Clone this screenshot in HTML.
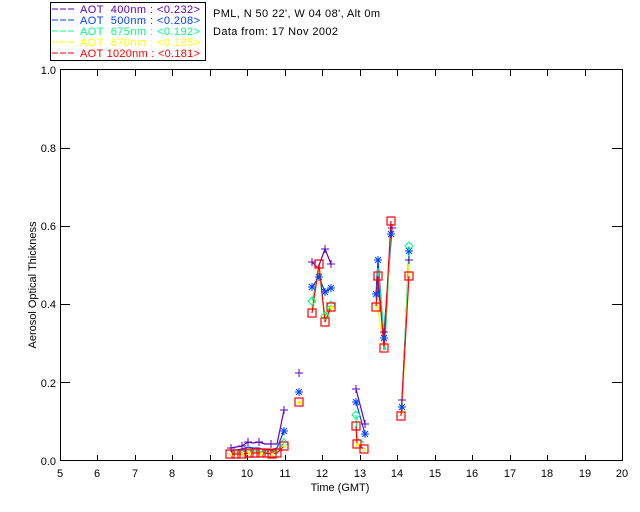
<!DOCTYPE html>
<html><head><meta charset="utf-8"><style>
html,body{margin:0;padding:0;background:#fff;width:640px;height:512px;overflow:hidden}
svg{display:block}
text{font-family:"Liberation Sans",sans-serif;font-size:11px;fill:#000;white-space:pre}
</style></head><body>
<svg width="640" height="512" viewBox="0 0 640 512" xmlns="http://www.w3.org/2000/svg">
<rect width="640" height="512" fill="#fff"/>
<!-- legend -->
<rect x="50.5" y="2.5" width="155" height="58" fill="none" stroke="#000" stroke-width="1"/>
<g font-size="11">
<line x1="52" y1="9" x2="75" y2="9" stroke="#6000c0" stroke-dasharray="6,2"/>
<text x="80" y="13" textLength="120" style="fill:#6000c0">AOT  400nm : &lt;0.232&gt;</text>
<line x1="52" y1="20" x2="75" y2="20" stroke="#0040ff" stroke-dasharray="6,2"/>
<text x="80" y="24" textLength="120" style="fill:#0040ff">AOT  500nm : &lt;0.208&gt;</text>
<line x1="52" y1="31" x2="75" y2="31" stroke="#00ff80" stroke-dasharray="6,2"/>
<text x="80" y="35" textLength="120" style="fill:#00ff80">AOT  675nm : &lt;0.192&gt;</text>
<line x1="52" y1="42" x2="75" y2="42" stroke="#ffff00" stroke-dasharray="6,2"/>
<text x="80" y="46" textLength="120" style="fill:#ffff00">AOT  870nm : &lt;0.185&gt;</text>
<line x1="52" y1="53" x2="75" y2="53" stroke="#ff0000" stroke-dasharray="6,2"/>
<text x="80" y="57" textLength="120" style="fill:#ff0000">AOT 1020nm : &lt;0.181&gt;</text>
</g>
<text x="213" y="17" textLength="167">PML, N 50 22', W 04 08', Alt 0m</text>
<text x="213" y="35" textLength="125">Data from: 17 Nov 2002</text>
<!-- axes -->
<rect x="60.5" y="69.5" width="562" height="391" fill="none" stroke="#000" stroke-width="1"/>
<g stroke="#000" stroke-width="1">
<path d="M97.5 461v-6M135.5 461v-6M172.5 461v-6M210.5 461v-6M247.5 461v-6M285.5 461v-6M322.5 461v-6M360.5 461v-6M397.5 461v-6M435.5 461v-6M472.5 461v-6M510.5 461v-6M547.5 461v-6M585.5 461v-6"/>
<path d="M97.5 70v6M135.5 70v6M172.5 70v6M210.5 70v6M247.5 70v6M285.5 70v6M322.5 70v6M360.5 70v6M397.5 70v6M435.5 70v6M472.5 70v6M510.5 70v6M547.5 70v6M585.5 70v6"/>
<path d="M60 148.5h10M60 226.5h10M60 304.5h10M60 382.5h10"/>
<path d="M622 148.5h-10M622 226.5h-10M622 304.5h-10M622 382.5h-10"/>
</g>
<g text-anchor="middle">
<text x="60" y="477">5</text><text x="97" y="477">6</text><text x="135" y="477">7</text><text x="172" y="477">8</text><text x="210" y="477">9</text><text x="247" y="477">10</text><text x="285" y="477">11</text><text x="322" y="477">12</text><text x="360" y="477">13</text><text x="397" y="477">14</text><text x="435" y="477">15</text><text x="472" y="477">16</text><text x="510" y="477">17</text><text x="547" y="477">18</text><text x="585" y="477">19</text><text x="622" y="477">20</text>
</g>
<g text-anchor="end">
<text x="56" y="465">0.0</text><text x="56" y="387">0.2</text><text x="56" y="308">0.4</text><text x="56" y="230">0.6</text><text x="56" y="152">0.8</text><text x="56" y="74">1.0</text>
</g>
<text x="340" y="491" text-anchor="middle">Time (GMT)</text>
<text transform="translate(36,285) rotate(-90)" text-anchor="middle">Aerosol Optical Thickness</text>
<!-- data lines -->
<g fill="none" stroke-width="1.2">
<g stroke="#6000c0">
<polyline points="231,448 236,447 242,446 248,442 253,443 259,442 265,444 271,444 277,444 284,410"/>
<polyline points="312,262 318,268 325,249 331,264"/>
<polyline points="356,389 365,424"/>
<polyline points="377,280 384,332 392,228"/>
<polyline points="402,400 409,260"/>
</g>
<g stroke="#0040ff">
<polyline points="231,450 236,450 242,449 248,447 253,448 259,448 265,450 271,450 277,448 284,431"/>
<polyline points="312,287 319,277 325,292 331,288"/>
<polyline points="356,402 365,434"/>
<polyline points="376,294 378,260 384,338 391,234"/>
<polyline points="402,407 409,251"/>
</g>
<g stroke="#00ff80">
<polyline points="231,452 236,452 242,452 248,450 253,451 259,451 265,452 271,452 277,451 284,443"/>
<polyline points="312,301 319,272 325,316 331,305"/>
<polyline points="356,415 357,438 364,443"/>
<polyline points="377,300 378,268 385,345 391,227"/>
<polyline points="402,412 409,246"/>
</g>
<g stroke="#ffff00">
<polyline points="312,309 319,268 325,320 331,307"/>
<polyline points="377,304 384,347 391,224"/>
<polyline points="402,414 409,262"/>
</g>
<g stroke="#ff0000">
<polyline points="230,454 236,454 242,454 249,453 255,453 259,453 265,453 271,454 277,453 284,446"/>
<polyline points="312,313 319,264 325,322 331,307"/>
<polyline points="356,426 357,444 364,449"/>
<polyline points="376,307 378,276 384,348 391,221"/>
<polyline points="401,416 409,276"/>
</g>
</g>
<!-- markers -->
<g fill="none" stroke="#6000c0" stroke-width="1">
<path d="M295 373h8M299 369v8 M280 410h8M284 406v8 M308 262h8M312 258v8 M321 249h8M325 245v8 M327 264h8M331 260v8 M352 389h8M356 385v8 M361 424h8M365 420v8 M373 280h8M377 276v8 M380 332h8M384 328v8 M388 228h8M392 224v8 M398 400h8M402 396v8 M405 260h8M409 256v8 M227 448h8M231 444v8 M238 446h8M242 442v8 M244 442h8M248 438v8 M255 442h8M259 438v8 M267 444h8M271 440v8"/>
</g>
<g fill="none" stroke="#0040ff" stroke-width="1">
<path d="M295 392h8M299 388v8M296 389l6 6M302 389l-6 6 M280 431h8M284 427v8M281 428l6 6M287 428l-6 6 M308 287h8M312 283v8M309 284l6 6M315 284l-6 6 M315 277h8M319 273v8M316 274l6 6M322 274l-6 6 M321 292h8M325 288v8M322 289l6 6M328 289l-6 6 M327 288h8M331 284v8M328 285l6 6M334 285l-6 6 M352 402h8M356 398v8M353 399l6 6M359 399l-6 6 M361 434h8M365 430v8M362 431l6 6M368 431l-6 6 M374 260h8M378 256v8M375 257l6 6M381 257l-6 6 M372 294h8M376 290v8M373 291l6 6M379 291l-6 6 M380 338h8M384 334v8M381 335l6 6M387 335l-6 6 M387 234h8M391 230v8M388 231l6 6M394 231l-6 6 M398 407h8M402 403v8M399 404l6 6M405 404l-6 6 M405 251h8M409 247v8M406 248l6 6M412 248l-6 6"/>
</g>
<g fill="none" stroke="#00ff80" stroke-width="1">
<path d="M312 297l4 4-4 4-4-4z M331 301l4 4-4 4-4-4z M356 411l4 4-4 4-4-4z M409 242l4 4-4 4-4-4z M284 439l4 4-4 4-4-4z M325 312l4 4-4 4-4-4z"/>
</g>
<g fill="none" stroke="#ff0000" stroke-width="1.2">
<rect x="226" y="450" width="8" height="8"/><rect x="232" y="450" width="8" height="8"/><rect x="238" y="450" width="8" height="8"/><rect x="245" y="449" width="8" height="8"/><rect x="251" y="449" width="8" height="8"/><rect x="257" y="449" width="8" height="8"/><rect x="263" y="449" width="8" height="8"/><rect x="268" y="450" width="8" height="8"/><rect x="273" y="449" width="8" height="8"/><rect x="280" y="442" width="8" height="8"/>
<rect x="295" y="398" width="8" height="8"/>
<rect x="308" y="309" width="8" height="8"/><rect x="315" y="260" width="8" height="8"/><rect x="321" y="318" width="8" height="8"/><rect x="327" y="303" width="8" height="8"/>
<rect x="352" y="422" width="8" height="8"/><rect x="353" y="440" width="8" height="8"/><rect x="360" y="445" width="8" height="8"/>
<rect x="372" y="303" width="8" height="8"/><rect x="374" y="272" width="8" height="8"/><rect x="380" y="344" width="8" height="8"/><rect x="387" y="217" width="8" height="8"/>
<rect x="397" y="412" width="8" height="8"/><rect x="405" y="272" width="8" height="8"/>
</g>
<g fill="#ffff00">
<rect x="229" y="453" width="3" height="3"/><rect x="241" y="453" width="3" height="3"/><rect x="248" y="452" width="3" height="3"/><rect x="260" y="452" width="3" height="3"/><rect x="271" y="453" width="3" height="3"/><rect x="283" y="445" width="3" height="3"/><rect x="298" y="401" width="3" height="3"/><rect x="330" y="306" width="3" height="3"/><rect x="356" y="443" width="3" height="3"/><rect x="363" y="448" width="3" height="3"/><rect x="383" y="347" width="3" height="3" fill="#00ff80"/><rect x="375" y="306" width="3" height="3"/>
</g>
</svg>
</body></html>
